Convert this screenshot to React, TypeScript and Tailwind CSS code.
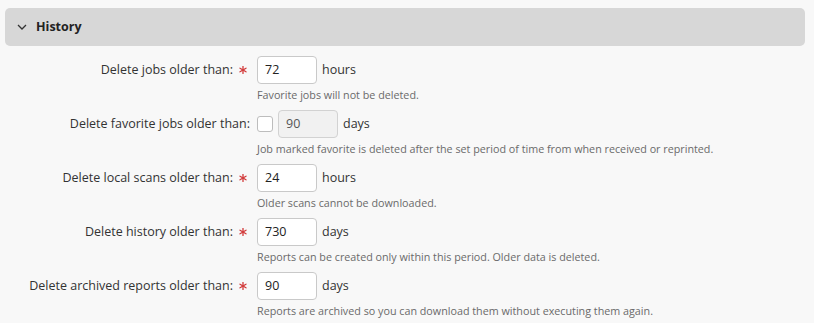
const font = { fontFamily: '"Open Sans", "Noto Sans", sans-serif' };

function Star() {
  return (
    <svg width="8" height="8" viewBox="0 0 8 8" className="ml-[6px] mr-[3px] shrink-0">
      <g stroke="#d23a3a" strokeWidth="1.3" strokeLinecap="round">
        <line x1="4" y1="0.5" x2="4" y2="7.5" />
        <line x1="1" y1="2.2" x2="7" y2="5.8" />
        <line x1="1" y1="5.8" x2="7" y2="2.2" />
      </g>
    </svg>
  );
}

type Row = {
  label: string;
  value: string;
  unit: string;
  help: string;
  required?: boolean;
  checkbox?: boolean;
};

const rows: Row[] = [
  { label: "Delete jobs older than:", value: "72", unit: "hours", help: "Favorite jobs will not be deleted.", required: true },
  { label: "Delete favorite jobs older than:", value: "90", unit: "days", help: "Job marked favorite is deleted after the set period of time from when received or reprinted.", checkbox: true },
  { label: "Delete local scans older than:", value: "24", unit: "hours", help: "Older scans cannot be downloaded.", required: true },
  { label: "Delete history older than:", value: "730", unit: "days", help: "Reports can be created only within this period. Older data is deleted.", required: true },
  { label: "Delete archived reports older than:", value: "90", unit: "days", help: "Reports are archived so you can download them without executing them again.", required: true },
];

function FieldRow({ row }: { row: Row }) {
  return (
    <div className="flex h-[54px]">
      <div className="w-[250px] h-7 flex items-center justify-end shrink-0">
        <span className="text-[12.5px] text-[#333]">{row.label}</span>
        {row.required && <Star />}
      </div>
      <div className="ml-[7px] flex flex-col">
        <div className="flex items-center h-7">
          {row.checkbox && (
            <div className="w-4 h-4 mr-[5px] rounded-[3px] border border-[#bdbdbd] bg-white" />
          )}
          <div
            className={
              row.checkbox
                ? "w-[60px] h-7 rounded-[4px] border border-[#d2d2d2] bg-[#f1f1f1] px-[7px] flex items-center text-[12.5px] text-[#555]"
                : "w-[60px] h-7 rounded-[4px] border border-[#c9c9c9] bg-white px-[7px] flex items-center text-[12.5px] text-[#222]"
            }
          >
            {row.value}
          </div>
          <span className="ml-[5px] text-[12.5px] text-[#333]">{row.unit}</span>
        </div>
        <div className="mt-[3px] text-[10.75px] leading-4 text-[#6a6a6a] whitespace-nowrap">{row.help}</div>
      </div>
    </div>
  );
}

export default function App() {
  return (
    <div className="w-[814px] h-[323px] bg-[#f8f8f8] overflow-hidden" style={font}>
      <div className="pt-2 px-[5px]">
        <div className="h-[38px] w-[800px] rounded-[5px] bg-[#d7d7d7] flex items-center pl-[12px]">
          <svg width="10" height="6" viewBox="0 0 10 6" className="shrink-0">
            <path d="M1 1 L5 5 L9 1" fill="none" stroke="#333" strokeWidth="1.3" />
          </svg>
          <span className="ml-[9px] text-[12.5px] font-bold text-[#222]">History</span>
        </div>
      </div>
      <div className="mt-[10px]">
        {rows.map((r) => (
          <FieldRow key={r.label} row={r} />
        ))}
      </div>
    </div>
  );
}
